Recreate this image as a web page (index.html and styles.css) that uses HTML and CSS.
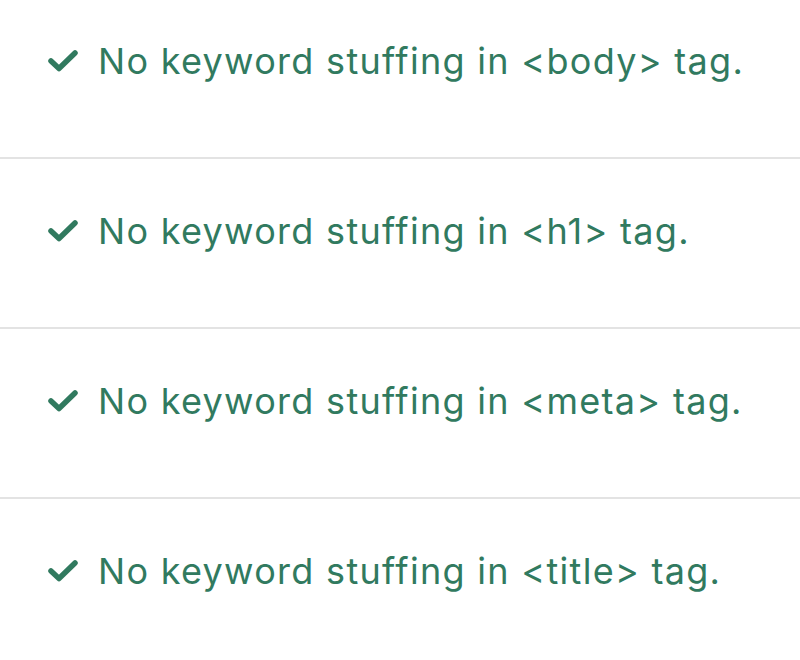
FILE: index.html
```html
<!DOCTYPE html>
<html>
<head>
<meta charset="utf-8">
<link rel="stylesheet" href="styles.css">
</head>
<body>
<ul class="checks">
  <li class="row first"><svg class="tick" viewBox="0 0 30 22"><path d="M3 11 L11 18.5 L27 3"/></svg><span>No keyword stuffing in &lt;body&gt; tag.</span></li>
  <li class="row"><svg class="tick" viewBox="0 0 30 22"><path d="M3 11 L11 18.5 L27 3"/></svg><span>No keyword stuffing in &lt;h1&gt; tag.</span></li>
  <li class="row"><svg class="tick" viewBox="0 0 30 22"><path d="M3 11 L11 18.5 L27 3"/></svg><span>No keyword stuffing in &lt;meta&gt; tag.</span></li>
  <li class="row"><svg class="tick" viewBox="0 0 30 22"><path d="M3 11 L11 18.5 L27 3"/></svg><span>No keyword stuffing in &lt;title&gt; tag.</span></li>
</ul>
</body>
</html>
```
FILE: styles.css
```css
html, body { margin: 0; padding: 0; background: #fff; }
body { font-family: Inter, "Noto Sans", sans-serif; color: #317a5f; overflow: hidden; }
.checks { list-style: none; margin: 0; padding: 0; }
.row {
  display: flex;
  align-items: center;
  gap: 20px;
  padding: 0 0 25px 48px;
  height: 143px;
  border-bottom: 2px solid #e3e3e3;
  font-size: 36px;
  line-height: 48px;
  letter-spacing: 1.3px;
}
.row.first { height: 121px; padding-bottom: 36px; }
.tick { width: 30px; height: 22px; flex: none; }
.tick path { fill: none; stroke: #317a5f; stroke-width: 5.5; stroke-linecap: round; stroke-linejoin: round; }
```
